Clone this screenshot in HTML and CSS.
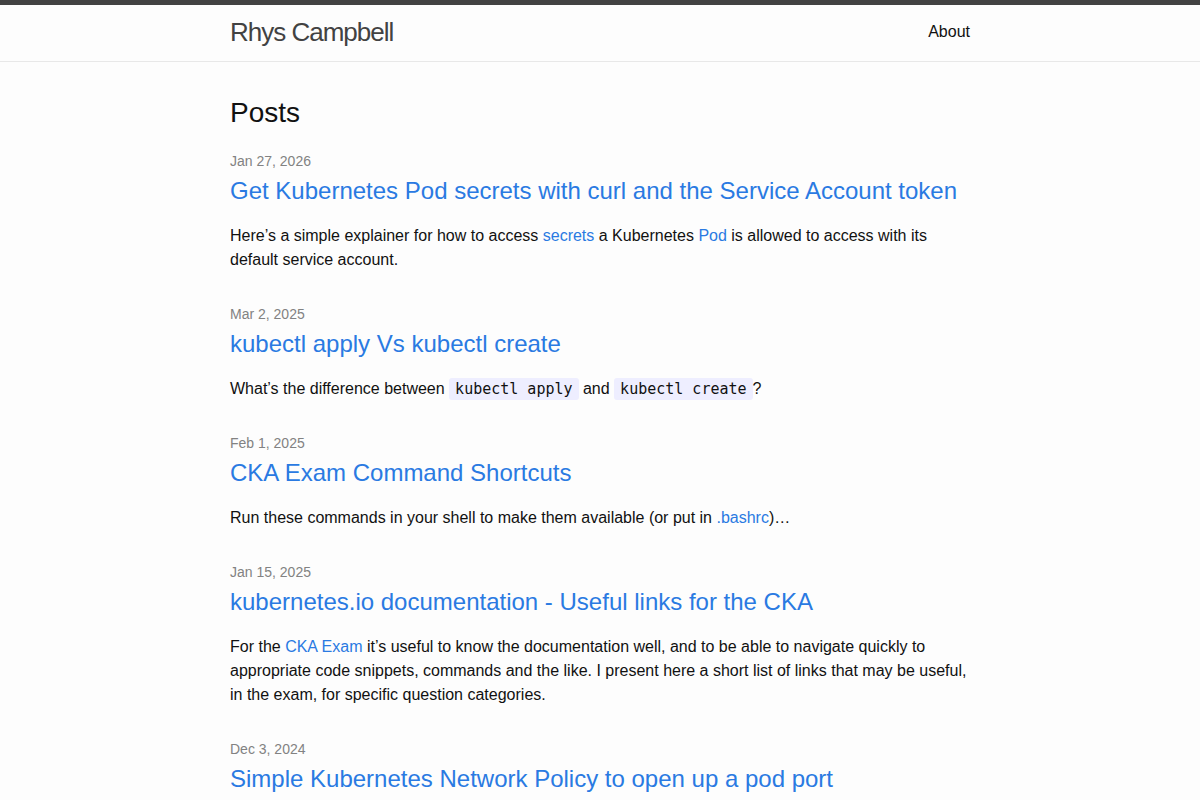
FILE: index.html
```html
<!DOCTYPE html>
<html lang="en">
<head>
  <meta charset="UTF-8">
  <title>Rhys Campbell</title>
  <link rel="stylesheet" href="styles.css">
</head>
<body>

<header class="site-header">
  <div class="wrapper header-inner">
    <a class="site-title" href="#">Rhys Campbell</a>
    <nav class="site-nav">
      <a class="page-link" href="#">About</a>
    </nav>
  </div>
</header>

<main class="page-content">
  <div class="wrapper">
    <h2 class="post-list-heading">Posts</h2>
    <ul class="post-list">
      <li>
        <span class="post-meta">Jan 27, 2026</span>
        <h3><a class="post-link" href="#">Get Kubernetes Pod secrets with curl and the Service Account token</a></h3>
        <p>Here’s a simple explainer for how to access <a href="#">secrets</a> a Kubernetes <a href="#">Pod</a> is allowed to access with its default service account.</p>
      </li>
      <li>
        <span class="post-meta">Mar 2, 2025</span>
        <h3><a class="post-link" href="#">kubectl apply Vs kubectl create</a></h3>
        <p>What’s the difference between <code>kubectl apply</code> and <code>kubectl create</code>?</p>
      </li>
      <li>
        <span class="post-meta">Feb 1, 2025</span>
        <h3><a class="post-link" href="#">CKA Exam Command Shortcuts</a></h3>
        <p>Run these commands in your shell to make them available (or put in <a href="#">.bashrc</a>)…</p>
      </li>
      <li>
        <span class="post-meta">Jan 15, 2025</span>
        <h3><a class="post-link" href="#">kubernetes.io documentation - Useful links for the CKA</a></h3>
        <p>For the <a href="#">CKA Exam</a> it’s useful to know the documentation well, and to be able to navigate quickly to appropriate code snippets, commands and the like. I present here a short list of links that may be useful, in the exam, for specific question categories.</p>
      </li>
      <li>
        <span class="post-meta">Dec 3, 2024</span>
        <h3><a class="post-link" href="#">Simple Kubernetes Network Policy to open up a pod port</a></h3>
        <p>A short example of a network policy that allows traffic to a single port on a pod.</p>
      </li>
    </ul>
  </div>
</main>

</body>
</html>
```

FILE: styles.css
```css
body {
  margin: 0;
  font-family: "Liberation Sans", Arial, sans-serif;
  font-size: 16px;
  line-height: 1.5;
  color: #111;
  background: #fdfdfd;
}
a {
  color: #2a7ae2;
  text-decoration: none;
}
.wrapper {
  max-width: 740px;
  margin: 0 auto;
  padding: 0 30px;
}

/* header */
.site-header {
  border-top: 5px solid #424242;
  border-bottom: 1px solid #e8e8e8;
  min-height: 55.95px;
}
.header-inner {
  display: flex;
  justify-content: space-between;
  align-items: center;
}
.site-title {
  font-size: 26px;
  font-weight: 300;
  line-height: 54px;
  letter-spacing: -1px;
  color: #424242;
}
.site-nav {
  line-height: 54px;
}
.page-link {
  color: #111;
}

/* posts */
.page-content {
  padding: 30px 0;
}
.post-list-heading {
  font-size: 28px;
  font-weight: 400;
  margin: 0 0 15px;
  line-height: 1.5;
}
.post-list {
  list-style: none;
  margin: 0;
  padding: 0;
}
.post-list li {
  margin-bottom: 30px;
}
.post-meta {
  font-size: 14px;
  color: #828282;
}
.post-list h3 {
  margin: 0 0 15px;
  font-weight: 400;
  font-size: 24px;
}
.post-link {
  display: block;
}
.post-list p {
  margin: 0 0 15px;
}
code {
  font-family: "DejaVu Sans Mono", monospace;
  font-size: 15px;
  background: #eef;
  border-radius: 3px;
  padding: 2px 6px;
}
```
